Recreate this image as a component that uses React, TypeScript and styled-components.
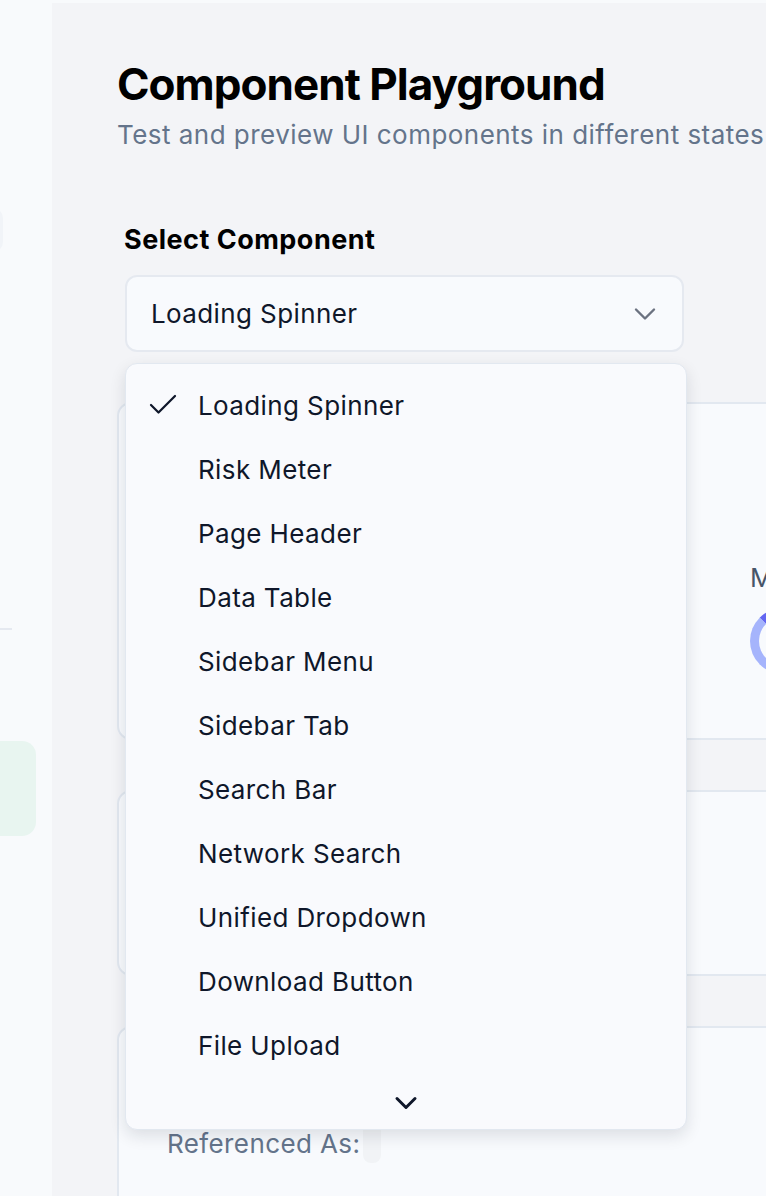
import React from 'react';
import styled, { createGlobalStyle } from 'styled-components';
import { Check, ChevronDown } from 'lucide-react';

const GlobalStyle = createGlobalStyle`
  * { box-sizing: border-box; }
  html, body { margin: 0; padding: 0; }
  body {
    font-family: Inter, "Noto Sans", "Liberation Sans", sans-serif;
    background: #f8fafc;
    color: #0f172a;
  }
`;

const componentList = [
  'Loading Spinner',
  'Risk Meter',
  'Page Header',
  'Data Table',
  'Sidebar Menu',
  'Sidebar Tab',
  'Search Bar',
  'Network Search',
  'Unified Dropdown',
  'Download Button',
  'File Upload',
];

export default function App() {
  const selected = 'Loading Spinner';

  return (
    <>
      <GlobalStyle />
      <Page>
        <Sidebar>
          <SideSearch />
          <SideDivider />
          <SideActive />
        </Sidebar>

        <Main>
          <Title>Component Playground</Title>
          <Subtitle>Test and preview UI components in different states and configurations</Subtitle>

          <SelectSection>
            <Label>Select Component</Label>
            <Trigger>
              <span>{selected}</span>
              <ChevronDown size={36} strokeWidth={1.6} color="#6b7280" />
            </Trigger>

            {/* открытое выпадающее меню поверх карточек */}
            <Menu>
              {componentList.map((name) => (
                <MenuItem key={name}>
                  <CheckSlot>
                    {name === selected && <Check size={36} strokeWidth={1.5} />}
                  </CheckSlot>
                  {name}
                </MenuItem>
              ))}
              <ScrollDown>
                <ChevronDown size={36} strokeWidth={2} color="#0f172a" />
              </ScrollDown>
            </Menu>
          </SelectSection>

          <Cards>
            <Card $height={338}>
              <CardTitle>Loading Spinner</CardTitle>
              <PreviewGrid>
                <Preview>
                  <PreviewLabel>Small</PreviewLabel>
                  <Spinner $size={40} />
                </Preview>
                <Preview>
                  <PreviewLabel>Default</PreviewLabel>
                  <Spinner $size={52} />
                </Preview>
                <Preview>
                  <PreviewLabel>Medium</PreviewLabel>
                  <Spinner $size={66} />
                </Preview>
              </PreviewGrid>
            </Card>

            <Card $height={186}>
              <CardTitle>Props</CardTitle>
            </Card>

            <Card $height={220}>
              <CardTitle>Usage</CardTitle>
              <RefRow>
                Referenced As:<Code />
              </RefRow>
            </Card>
          </Cards>
        </Main>
      </Page>
    </>
  );
}

const Page = styled.div`
  display: flex;
  height: 100vh;
  overflow: hidden;
  background: #f8fafc;
`;

const Sidebar = styled.aside`
  width: 52px;
  flex-shrink: 0;
  display: flex;
  flex-direction: column;
  align-items: flex-end;
  overflow: hidden;
  padding-top: 208px;
`;

const SideSearch = styled.div`
  width: 220px;
  height: 44px;
  flex-shrink: 0;
  margin-right: 49px;
  border-radius: 10px;
  background: #f1f4f8;
`;

const SideDivider = styled.div`
  width: 220px;
  height: 2px;
  flex-shrink: 0;
  margin-top: 376px;
  margin-right: 40px;
  background: #e5e9f0;
`;

const SideActive = styled.div`
  width: 220px;
  height: 95px;
  flex-shrink: 0;
  margin-top: 111px;
  margin-right: 16px;
  border-radius: 14px;
  background: #e8f5f0;
`;

const Main = styled.main`
  flex: 1;
  min-width: 0;
  margin-top: 3px;
  padding: 55px 0 0 65px;
  background: #f3f4f7;
  overflow: hidden;
`;

const Title = styled.h1`
  margin: 0;
  font-size: 44px;
  line-height: 52px;
  font-weight: 700;
  letter-spacing: -0.022em;
  color: #000;
  white-space: nowrap;
`;

const Subtitle = styled.p`
  margin: 8px 0 0;
  font-size: 26px;
  line-height: 34px;
  letter-spacing: 0.018em;
  color: #64748b;
  white-space: nowrap;
`;

const SelectSection = styled.section`
  position: relative;
  width: 570px;
  margin-top: 71px;
  padding-left: 7px;
`;

const Label = styled.div`
  font-size: 27px;
  line-height: 34px;
  font-weight: 700;
  letter-spacing: 0.018em;
  color: #000;
  margin-bottom: 18px;
`;

const Trigger = styled.button`
  width: 559px;
  height: 77px;
  margin-left: 1px;
  display: flex;
  align-items: center;
  justify-content: space-between;
  padding: 0 19px 0 24px;
  border: 2px solid #e5e9f0;
  border-radius: 12px;
  background: #f8fafd;
  font-family: inherit;
  font-size: 26px;
  letter-spacing: 0.015em;
  color: #0f172a;
  cursor: pointer;
`;

const Menu = styled.div`
  position: absolute;
  top: 140px;
  left: 8px;
  z-index: 10;
  width: 562px;
  padding: 9px 0 0;
  border: 1px solid #e2e8f0;
  border-radius: 12px;
  background: #f9fafd;
  box-shadow: 0 6px 16px rgba(15, 23, 42, 0.12);
`;

const MenuItem = styled.div`
  height: 64px;
  display: flex;
  align-items: center;
  font-size: 26px;
  letter-spacing: 0.015em;
  color: #0f172a;
`;

const CheckSlot = styled.span`
  width: 72px;
  display: flex;
  justify-content: flex-end;
  padding-right: 17px;
  color: #0f172a;
`;

const ScrollDown = styled.div`
  height: 52px;
  display: flex;
  align-items: center;
  justify-content: center;
`;

const Cards = styled.div`
  display: flex;
  flex-direction: column;
  gap: 50px;
  margin-top: 50px;
`;

const Card = styled.div<{ $height: number }>`
  width: 1100px;
  height: ${(p) => p.$height}px;
  padding: 32px 48px;
  border: 2px solid #e2e8f0;
  border-radius: 14px;
  background: #f8fafd;
`;

const CardTitle = styled.h3`
  margin: 0;
  font-size: 28px;
  font-weight: 600;
  color: #0f172a;
`;

const PreviewGrid = styled.div`
  display: grid;
  grid-template-columns: repeat(3, 300px);
  margin-top: 92px;
  margin-left: -17px;
`;

const Preview = styled.div`
  display: flex;
  flex-direction: column;
  align-items: flex-start;
  gap: 14px;
`;

const PreviewLabel = styled.span`
  font-size: 26px;
  line-height: 32px;
  color: #475569;
`;

const Spinner = styled.div<{ $size: number }>`
  width: ${(p) => p.$size}px;
  height: ${(p) => p.$size}px;
  border-radius: 50%;
  border: 9px solid #a5b4fc;
  border-top-color: #6366f1;
  border-right-color: #6366f1;
`;

const RefRow = styled.div`
  display: flex;
  align-items: center;
  margin-top: 29px;
  font-size: 26px;
  letter-spacing: 0.015em;
  color: #64748b;
`;

const Code = styled.code`
  display: inline-block;
  width: 18px;
  height: 40px;
  margin-left: 3px;
  border-radius: 8px;
  background: #f1f3f6;
`;
